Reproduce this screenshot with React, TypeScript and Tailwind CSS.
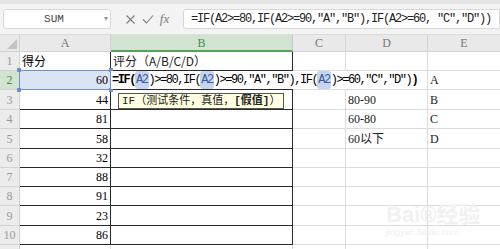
import React from "react";

const mono = { fontFamily: '"Liberation Mono", "Noto Sans CJK SC", monospace' };
const cjk = { fontFamily: '"Liberation Serif", "Noto Sans CJK SC", serif' };

const rowHeights = [19, 19, 20, 19, 20, 19, 19, 19, 20, 19, 19];
const scores = ["", "60", "44", "81", "58", "32", "88", "91", "23", "86", ""];
const colD: Record<number, string> = { 3: "80-90", 4: "60-80", 5: "60以下" };
const colE: Record<number, string> = { 2: "A", 3: "B", 4: "C", 5: "D" };

const Ref = () => (
  <span className="bg-[#c6d5ef] text-[#3b5a9a] rounded-[3px] px-[1px]">A2</span>
);

const FormulaCell = () => (
  <div
    className="relative z-10 h-full w-[308px] bg-white whitespace-nowrap flex items-center pl-[1px] text-[12px] tracking-[-1.45px] text-black"
    style={mono}
  >
    <span className="font-bold">=IF(</span>
    <Ref />
    <span>)&gt;=80,IF(</span>
    <Ref />
    <span>)&gt;=90,"A","B"),IF(</span>
    <Ref />
    <span>)&gt;=60,"C","D")</span>
    <span className="font-bold">)</span>
    <span className="ml-[2px] w-[1px] h-[13px] bg-black" />
  </div>
);

export default function App() {
  return (
    <div className="w-[500px] h-[249px] overflow-hidden bg-white relative text-[12px]" style={cjk}>
      {/* formula bar */}
      <div className="h-[4px] bg-[#e2e2e2]" />
      <div className="h-[31px] bg-[#f3f3f3] flex items-center border-b border-[#dcdcdc]">
        <div className="ml-[3px] w-[108px] h-[20px] bg-white border border-[#d8d8d8] rounded-[3px] flex items-center">
          <span className="flex-1 text-center text-[11px] text-[#444]" style={mono}>SUM</span>
          <span className="text-[8px] text-[#999] pr-[2px]">▾</span>
        </div>
        <div className="w-[72px] flex items-center justify-center gap-[6px] text-[#7a7a7a]">
          <svg width="11" height="11" viewBox="0 0 11 11">
            <path d="M1.5 1.5 L9.5 9.5 M9.5 1.5 L1.5 9.5" stroke="#7d7d7d" strokeWidth="1.1" fill="none" />
          </svg>
          <svg width="12" height="11" viewBox="0 0 12 11">
            <path d="M1 5.5 L4.5 9 L11 1.5" stroke="#7d7d7d" strokeWidth="1.1" fill="none" />
          </svg>
          <span className="italic text-[13px] text-[#7a7a7a]" style={{ fontFamily: '"Liberation Serif", serif' }}>fx</span>
        </div>
        <div className="flex-1 h-[20px] bg-white border border-[#d8d8d8] rounded-l-[3px] flex items-center pl-[7px] text-[12px] tracking-[-1.2px] text-[#222]" style={mono}>
          =IF(A2&gt;=80,IF(A2&gt;=90,"A","B"),IF(A2&gt;=60, "C","D"))
        </div>
      </div>

      {/* column headers */}
      <div className="flex h-[17px] bg-[#e9e9e9] text-[#777] text-[12px]">
        <div className="w-[20px] border-r border-b border-[#d2d2d2] relative">
          <svg width="10" height="10" viewBox="0 0 10 10" className="absolute right-[2px] bottom-[2px]">
            <path d="M10 0 L10 10 L0 10 Z" fill="#c4c4c4" />
          </svg>
        </div>
        <div className="w-[91px] border-r border-b border-[#d2d2d2] flex items-center justify-center">A</div>
        <div className="w-[182px] bg-[#d2e4d1] border-r border-b-2 border-r-[#c8c8c8] border-b-[#55a05a] flex items-center justify-center text-[#3f8f46]">B</div>
        <div className="w-[53px] border-r border-b border-[#d2d2d2] flex items-center justify-center">C</div>
        <div className="w-[82px] border-r border-b border-[#d2d2d2] flex items-center justify-center">D</div>
        <div className="w-[72px] border-b border-[#d2d2d2] flex items-center justify-center">E</div>
      </div>

      {/* rows */}
      {rowHeights.map((h, i) => {
        const r = i + 1;
        const active = r === 2;
        const boxed = r <= 10;
        return (
          <div key={r} className="flex" style={{ height: h }}>
            <div
              className={`w-[20px] flex items-center justify-center border-r border-b border-[#d2d2d2] text-[12px] ${
                active ? "bg-[#d2e4d1] text-[#3f8f46]" : "bg-[#ececec] text-[#9a9a9a]"
              }`}
            >
              {r <= 10 ? r : ""}
            </div>
            <div
              className={`w-[91px] flex items-center border-r border-b ${
                boxed ? "border-[#2a2a2a]" : "border-[#dcdcdc]"
              } ${active ? "bg-[#dbe4f3] relative" : ""} ${r === 1 ? "justify-start pl-[2px]" : "justify-end pr-[2px]"}`}
              style={r === 1 ? cjk : { fontFamily: '"Liberation Serif", serif', fontSize: 12 }}
            >
              {r === 1 ? <span style={{ fontFamily: '"Noto Sans CJK SC", sans-serif' }}>得分</span> : scores[i]}
              {active && (
                <>
                  <div className="absolute inset-[-1px] border border-[#6d8fcb] pointer-events-none" />
                  <div className="absolute left-[-3px] top-[-3px] w-[4px] h-[4px] bg-[#6d8fcb]" />
                  <div className="absolute right-[-3px] top-[-3px] w-[4px] h-[4px] bg-[#6d8fcb]" />
                  <div className="absolute left-[-3px] bottom-[-3px] w-[4px] h-[4px] bg-[#6d8fcb]" />
                  <div className="absolute right-[-3px] bottom-[-3px] w-[4px] h-[4px] bg-[#6d8fcb]" />
                </>
              )}
            </div>
            <div
              className={`w-[182px] flex items-center border-r border-b ${
                boxed ? "border-[#2a2a2a]" : "border-[#dcdcdc]"
              } ${active ? "shadow-[inset_0_1px_0_#3f9a4d]" : "pl-[2px]"}`}
            >
              {r === 1 && (
                <span className="text-[12px] text-[#222]" style={{ fontFamily: '"Noto Sans CJK SC", sans-serif' }}>
                  评分（A/B/C/D）
                </span>
              )}
              {active && <FormulaCell />}
            </div>
            <div className="w-[53px] border-r border-b border-[#dcdcdc]" />
            <div className="w-[82px] border-r border-b border-[#dcdcdc] flex items-center pl-[2px] text-[#222]">
              {colD[r] && (
                <span className="text-[12px]" style={{ fontFamily: '"Liberation Serif", "Noto Sans CJK SC", serif' }}>
                  {colD[r]}
                </span>
              )}
            </div>
            <div className="w-[72px] border-b border-[#dcdcdc] flex items-center pl-[2px] text-[#222]" style={{ fontFamily: '"Liberation Serif", serif' }}>
              {colE[r]}
            </div>
          </div>
        );
      })}

      {/* function tooltip */}
      <div
        className="absolute left-[118px] top-[93px] h-[16px] px-[3px] bg-[#ffffe1] border border-[#555] flex items-center text-[11px] text-[#222] whitespace-nowrap"
        style={{ fontFamily: '"Liberation Mono", "Noto Sans CJK SC", monospace' }}
      >
        IF（测试条件，真值，<span className="font-bold">[假值]</span>）
      </div>

      {/* watermark */}
      <div className="absolute left-[386px] top-[204px] flex flex-col items-start pointer-events-none">
        <div className="text-[22px] font-bold text-[#f1f1f1] leading-none" style={{ fontFamily: '"Liberation Sans", "Noto Sans CJK SC", sans-serif' }}>
          Bai<span className="text-[#eeeeee]">®</span>经验
        </div>
        <div className="text-[9px] text-[#f0f0f0] leading-none mt-[2px]" style={{ fontFamily: '"Liberation Sans", sans-serif' }}>
          jingyan.baidu.com
        </div>
      </div>
    </div>
  );
}
